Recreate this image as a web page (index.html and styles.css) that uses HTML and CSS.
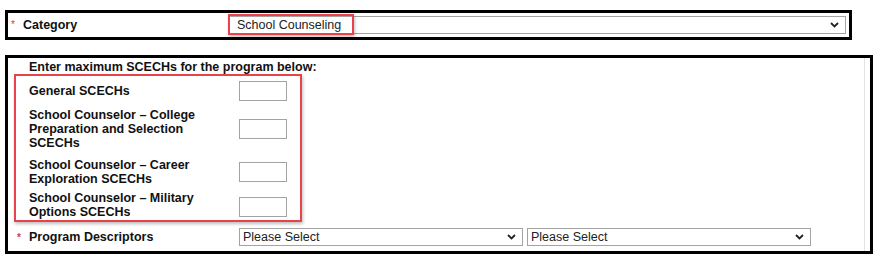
FILE: index.html
```html
<!DOCTYPE html>
<html lang="en">
<head>
    <meta charset="UTF-8">
    <title>Program SCECHs</title>
    <link rel="stylesheet" href="styles.css">
</head>
<body>

    <!-- Category -->
    <div class="panel panel-category">
        <div class="field">
            <span class="req">*</span>
            <span class="label">Category</span>
            <div class="select select-wide">
                <span>School Counseling</span>
                <svg class="chevron" width="9" height="6" viewBox="0 0 9 6"><path d="M1 1l3.5 3.5L8 1" fill="none" stroke="#222" stroke-width="1.8"/></svg>
            </div>
        </div>
        <div class="callout callout-category"></div>
    </div>

    <!-- SCECHs -->
    <div class="panel panel-scechs">
        <div class="rows">
            <div class="heading">Enter maximum SCECHs for the program below:</div>

            <div class="row row-1">
                <div class="row-label"><span>General SCECHs</span></div>
                <input class="num" type="text">
            </div>
            <div class="row row-2">
                <div class="row-label"><span>School Counselor – College Preparation and Selection SCECHs</span></div>
                <input class="num" type="text">
            </div>
            <div class="row row-3">
                <div class="row-label"><span>School Counselor – Career Exploration SCECHs</span></div>
                <input class="num" type="text">
            </div>
            <div class="row row-4">
                <div class="row-label"><span>School Counselor – Military Options SCECHs</span></div>
                <input class="num" type="text">
            </div>

            <div class="row row-desc">
                <div class="row-label"><span class="req">*</span><span>Program Descriptors</span></div>
                <div class="select select-half">
                    <span>Please Select</span>
                    <svg class="chevron" width="9" height="6" viewBox="0 0 9 6"><path d="M1 1l3.5 3.5L8 1" fill="none" stroke="#222" stroke-width="1.8"/></svg>
                </div>
                <div class="select select-half">
                    <span>Please Select</span>
                    <svg class="chevron" width="9" height="6" viewBox="0 0 9 6"><path d="M1 1l3.5 3.5L8 1" fill="none" stroke="#222" stroke-width="1.8"/></svg>
                </div>
            </div>
        </div>
        <div class="callout callout-scechs"></div>
    </div>

</body>
</html>
```

FILE: styles.css
```css
* {
    margin: 0;
    padding: 0;
    box-sizing: border-box;
}
body {
    font-family: "Liberation Sans", Arial, sans-serif;
    font-size: 12.5px;
    line-height: 14px;
    color: #111;
    background: #fff;
}
/* Boxes */
.panel {
    position: relative;
    margin-left: 5px;
    border: 3px solid #000;
    background: #fff;
}
.panel-category {
    margin-top: 10px;
    width: 847px;
    height: 30px;
    padding-left: 3px;
}
.panel-scechs {
    margin-top: 15px;
    width: 868px;
    height: 199px;
    padding-right: 5px;
}
/* Category row */
.field {
    display: flex;
    align-items: center;
    height: 24px;
}
.req {
    display: inline-block;
    width: 12px;
    color: #d04040;
    font-size: 10px;
    align-self: flex-start;
    line-height: 12px;
}
.field .req {
    margin-top: 6px;
}
.label {
    width: 206px;
    font-weight: bold;
}
/* Fake select */
.select {
    display: flex;
    align-items: center;
    justify-content: space-between;
    height: 18px;
    padding: 0 6px 0 7px;
    border: 1px solid #a3a3a3;
    background: #fff;
    font-size: 12.5px;
    color: #222;
}
.select-wide {
    width: 617px;
}
.select-half {
    width: 284px;
    padding-left: 3px;
}
.select-half + .select-half {
    margin-left: 4px;
}
.chevron {
    flex-shrink: 0;
}
/* SCECHs rows */
.rows {
    height: 100%;
    padding: 2px 0 0 21px;
    border-right: 1px solid #e4e4e4;
}
.heading {
    font-weight: bold;
}
.row {
    display: flex;
    align-items: center;
}
.row-label {
    width: 210px;
    font-weight: bold;
}
.row-label span {
    display: block;
    max-width: 175px;
}
.num {
    width: 48px;
    height: 20px;
    border: 1px solid #a3a3a3;
    background: #fff;
}
.row-1 { margin-top: 7px; }
.row-2 { margin-top: 7px; }
.row-3 { margin-top: 8px; }
.row-4 { margin-top: 5px; }
.row-4 .num { margin-top: 3px; }
.row-desc {
    margin-top: 9px;
}
.row-desc .row-label {
    display: flex;
    margin-left: -12px;
    width: 222px;
}
.row-desc .req {
    margin-top: 2px;
}
/* Red callouts */
.callout {
    position: absolute;
    border: 2px solid #e8434a;
    box-shadow: 1px 2px 3px rgba(0, 0, 0, 0.25);
}
.callout-category {
    left: 220px;
    top: 1px;
    width: 126px;
    height: 21px;
}
.callout-scechs {
    left: 6px;
    top: 16px;
    width: 288px;
    height: 148px;
}
```
